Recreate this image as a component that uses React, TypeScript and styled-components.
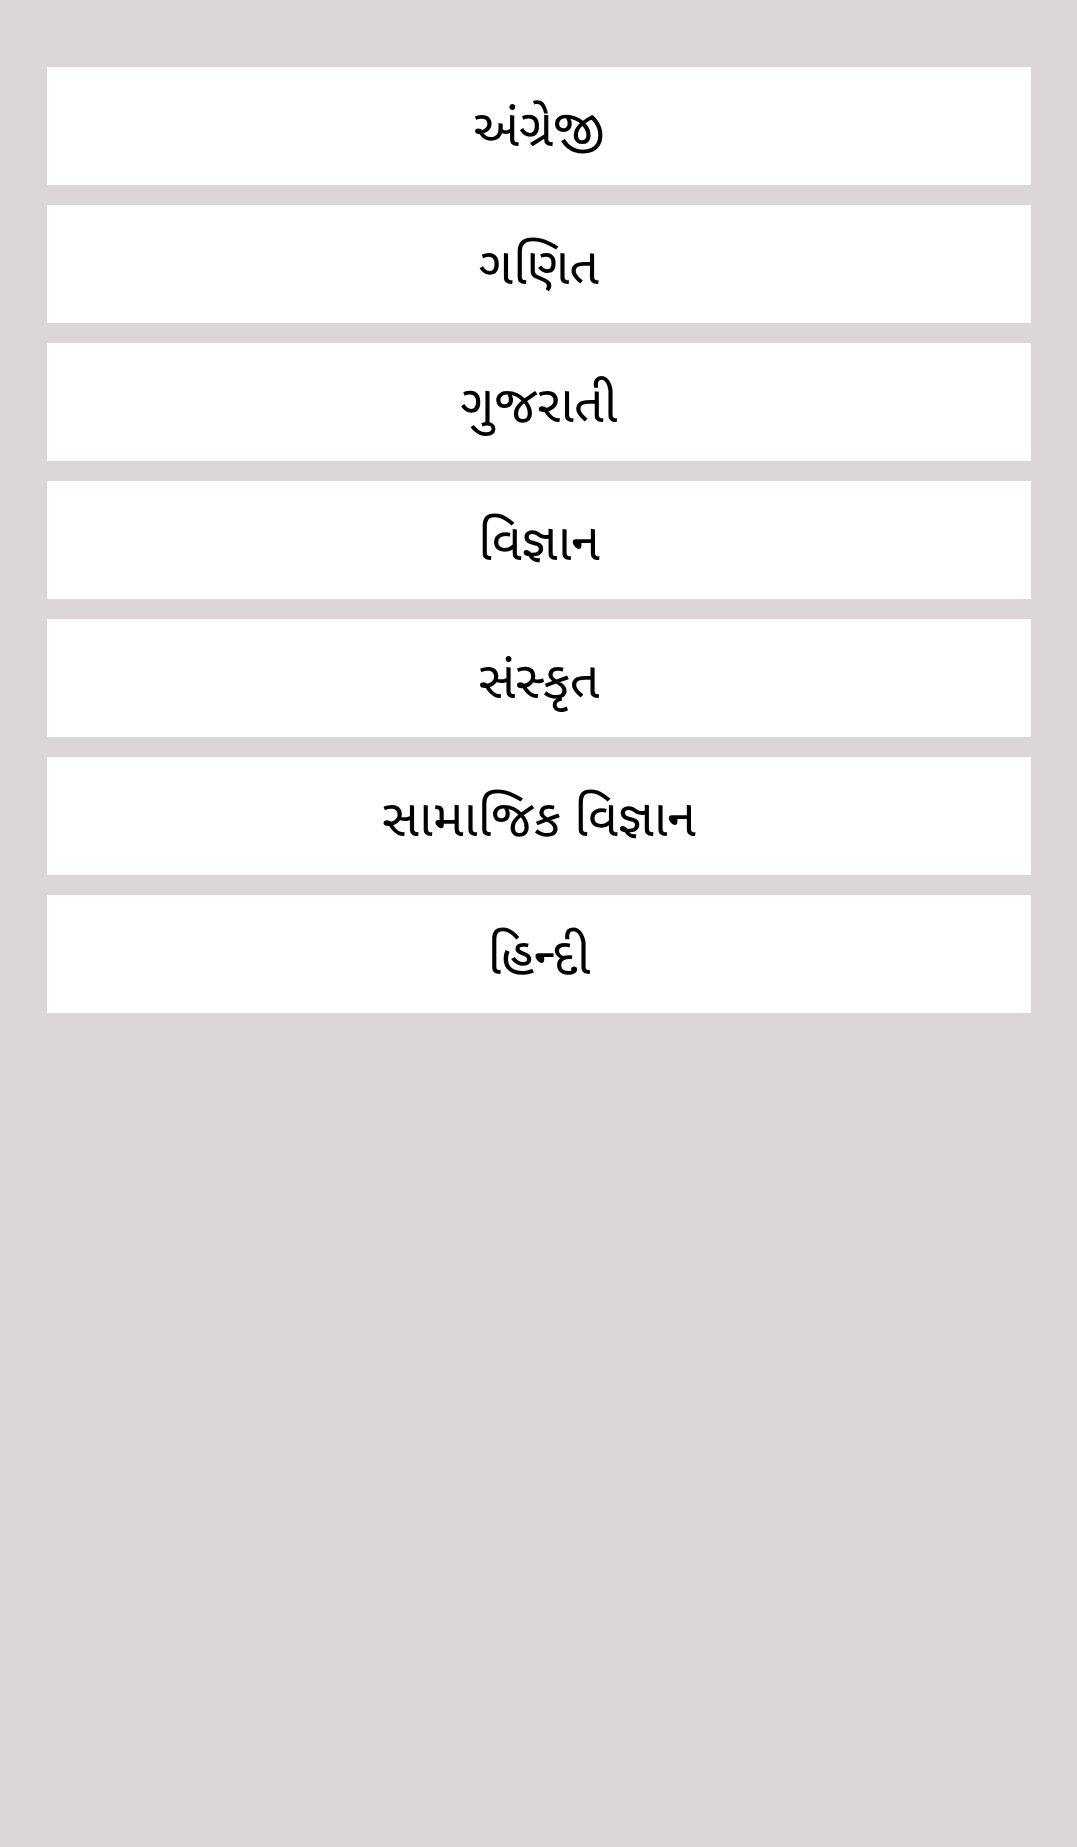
import React from "react";
import styled, { createGlobalStyle } from "styled-components";

const Global = createGlobalStyle`
  html, body { margin: 0; padding: 0; background: #dcd6d6; }
  body { font-family: "Noto Sans", "Noto Sans Gujarati", sans-serif; }
`;

const Page = styled.div`
  min-height: 1847px;
  background: #dcd6d6;
  padding: 67px 46px 0 47px;
  box-sizing: border-box;
`;

const List = styled.div`
  display: flex;
  flex-direction: column;
  gap: 20px;
`;

const Card = styled.div`
  height: 118px;
  background: #ffffff;
  display: flex;
  align-items: center;
  justify-content: center;
  font-size: 52px;
  line-height: 1;
  color: #000;
`;

const subjects = ["અંગ્રેજી", "ગણિત", "ગુજરાતી", "વિજ્ઞાન", "સંસ્કૃત", "સામાજિક વિજ્ઞાન", "હિન્દી"];

export default function App() {
  return (
    <>
      <Global />
      <Page>
        <List>
          {subjects.map((s) => (
            <Card key={s}>{s}</Card>
          ))}
        </List>
      </Page>
    </>
  );
}
